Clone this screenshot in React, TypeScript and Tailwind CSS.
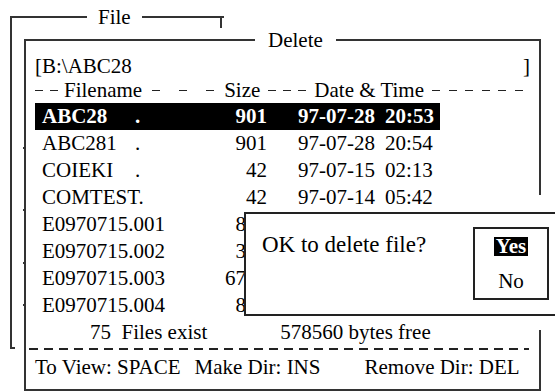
import React from "react";

type FileRow = {
  base: string;
  ext?: string;
  size: string;
  date?: string;
  time?: string;
  selected?: boolean;
};

const files: FileRow[] = [
  { base: "ABC28", ext: ".", size: "901", date: "97-07-28", time: "20:53", selected: true },
  { base: "ABC281", ext: ".", size: "901", date: "97-07-28", time: "20:54" },
  { base: "COIEKI", ext: ".", size: "42", date: "97-07-15", time: "02:13" },
  { base: "COMTEST.", size: "42", date: "97-07-14", time: "05:42" },
  { base: "E0970715.001", size: "845" },
  { base: "E0970715.002", size: "326" },
  { base: "E0970715.003", size: "6712" },
  { base: "E0970715.004", size: "845" },
];

function Dashes({ n, className }: { n: number; className: string }) {
  return (
    <span className={`flex items-center justify-between ${className}`}>
      {Array.from({ length: n }, (_, i) => (
        <span key={i} className="h-[1.5px] w-[8px] bg-[#222]" />
      ))}
    </span>
  );
}

function Row({ row }: { row: FileRow }) {
  return (
    <div
      className={`flex h-[27px] w-[405px] items-center whitespace-pre leading-none ${
        row.selected ? "bg-black font-bold text-white" : ""
      }`}
    >
      <span className="w-[7px]" />
      {row.ext ? (
        <span className="flex w-[150px]">
          <span className="w-[93px]">{row.base}</span>
          <span>{row.ext}</span>
        </span>
      ) : (
        <span className="w-[150px]">{row.base}</span>
      )}
      <span className="w-[75px] text-right">{row.size}</span>
      {row.date && (
        <>
          <span className="ml-[31px] w-[87px]">{row.date}</span>
          <span>{row.time}</span>
        </>
      )}
    </div>
  );
}

export default function App() {
  return (
    <div className="relative h-[392px] w-[555px] overflow-hidden bg-white font-['Liberation_Serif',serif] text-[21px] text-black">
      {/* File window (behind) */}
      <div className="absolute left-[10px] top-[16px] h-[333px] w-[212px] border-l-2 border-[#333]">
        <div className="absolute -left-[2px] top-0 flex h-[2px] w-[214px] items-center">
          <span className="h-[2px] w-[77px] bg-[#333]" />
          <span className="px-[11px] leading-none">File</span>
          <span className="h-[2px] flex-1 bg-[#333]" />
        </div>
        <span className="absolute right-0 top-0 h-[12px] w-[2px] bg-[#333]" />
        <span className="absolute bottom-0 left-0 h-[2px] w-[3px] bg-[#333]" />
        <span className="absolute left-[11px] top-[131px] h-[2px] w-[3px] bg-[#333]" />
        <span className="absolute left-[11px] top-[193px] h-[2px] w-[3px] bg-[#333]" />
        <span className="absolute left-[11px] top-[246px] h-[2px] w-[3px] bg-[#333]" />
        <span className="absolute left-[11px] top-[288px] h-[2px] w-[3px] bg-[#333]" />
      </div>

      {/* Delete window */}
      <div className="absolute left-[24px] top-[39px] h-[352px] w-[517px] border-x-2 border-b-2 border-[#333] bg-white">
        <div className="absolute -left-[2px] top-0 flex h-[2px] w-[517px] items-center">
          <span className="h-[2px] w-[231px] bg-[#333]" />
          <span className="px-[13px] leading-none">Delete</span>
          <span className="h-[2px] flex-1 bg-[#333]" />
        </div>

        <div className="flex flex-col pl-[9px] pr-[9px] pt-[16px]">
          <div className="flex h-[23px] items-center justify-between leading-none">
            <span>[B:\ABC28</span>
            <span>]</span>
          </div>

          <div className="flex h-[25px] items-center whitespace-pre leading-none">
            <Dashes n={2} className="w-[23px]" />
            <span className="ml-[6px]">Filename</span>
            <Dashes n={3} className="ml-[10px] w-[62px]" />
            <span className="ml-[10px]">Size</span>
            <Dashes n={3} className="ml-[8px] w-[38px]" />
            <span className="ml-[8px]">Date &amp; Time</span>
            <Dashes n={6} className="ml-[8px] w-[91px]" />
          </div>

          {files.map((f) => (
            <Row key={f.base} row={f} />
          ))}

          <div className="flex h-[27px] items-center whitespace-pre leading-none">
            <span className="ml-[55px]">75  Files exist</span>
            <span className="ml-[73px]">578560 bytes free</span>
          </div>

          <div className="-ml-[6px] mt-[2px] h-[1.5px] w-[500px] bg-[repeating-linear-gradient(90deg,#222_0_9px,transparent_9px_15px)]" />

          <div className="mt-[4px] flex h-[27px] items-center whitespace-pre leading-none">
            <span>To View: SPACE</span>
            <span className="ml-[14px]">Make Dir: INS</span>
            <span className="ml-[44px]">Remove Dir: DEL</span>
          </div>
        </div>
      </div>

      {/* gaps in the Delete window's right edge around the dialog */}
      <span className="absolute left-[535px] top-[195px] h-[17px] w-[10px] bg-white" />
      <span className="absolute left-[535px] top-[316px] h-[14px] w-[10px] bg-white" />

      {/* confirm dialog */}
      <div className="absolute left-[244px] top-[212px] flex h-[104px] w-[330px] border-2 border-[#222] bg-white">
        <div className="w-[227px] pl-[16px] pt-[17px] text-[23px] leading-[27px]">
          OK to delete file?
        </div>
        <div className="mt-[13px] flex h-[73px] w-[76px] flex-col items-center border-2 border-[#222] pt-[8px]">
          <span className="h-[19px] bg-black px-[2px] font-bold leading-[19px] text-white">Yes</span>
          <span className="mt-[12px] leading-[27px]">No</span>
        </div>
      </div>
    </div>
  );
}
